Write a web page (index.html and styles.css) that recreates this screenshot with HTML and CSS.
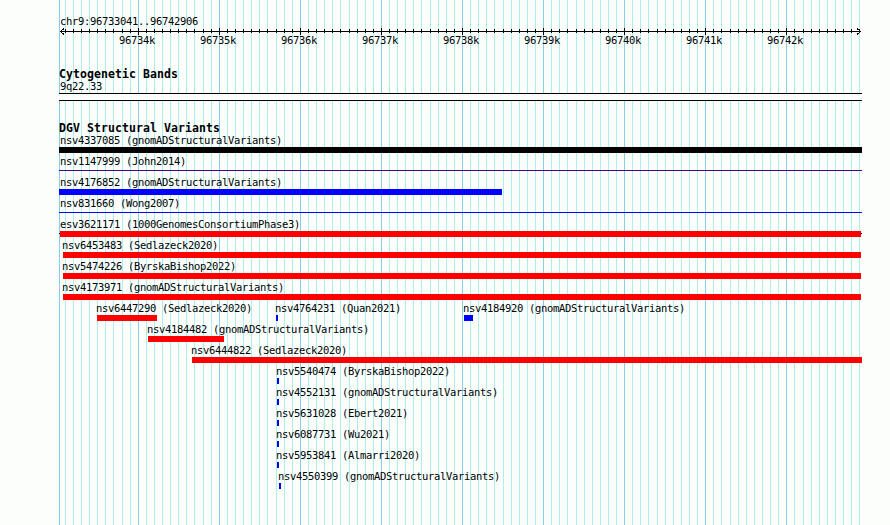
FILE: index.html
```html
<html>
<head>
  <meta charset="utf-8">
  <title>DGV Structural Variants</title>
  <link rel="stylesheet" href="styles.css">
</head>
<body>
  <div class="browser">
    <svg class="gridlines" id="gridlines" width="890" height="525"></svg>
    <div class="tracks">
      <div class="region">chr9:96733041..96742906</div>
      <svg class="ruler" id="ruler" width="803" height="9">
        <path d="M1 4.5H802M5 1.5L1.5 4.5L5 7.5M798 1.5L801.5 4.5L798 7.5" />
      </svg>
      <div class="scale" id="scale"></div>
      <h2>Cytogenetic Bands</h2>
      <div class="band-name">9q22.33</div>
      <div class="band"></div>
      <h2>DGV Structural Variants</h2>
      <div id="variants"></div>
    </div>
  </div>
  <script>
    var LEFT = 59;
    var start = 96733041;
    var pxPerBase = 0.08107;

    // label, study, colour, bar start, bar end, label start (pixels on the panel)
    var rows = [
      [['nsv4337085', 'gnomADStructuralVariants', 'black', 59, 862, 60]],
      [['nsv1147999', 'John2014', 'indigo thin', 59, 862, 60]],
      [['nsv4176852', 'gnomADStructuralVariants', 'blue', 59, 502, 60]],
      [['nsv831660', 'Wong2007', 'blue thin', 59, 862, 60]],
      [['esv3621171', '1000GenomesConsortiumPhase3', 'red open', 59, 862, 60]],
      [['nsv6453483', 'Sedlazeck2020', 'red', 63, 861, 62]],
      [['nsv5474226', 'ByrskaBishop2022', 'red', 63, 861, 62]],
      [['nsv4173971', 'gnomADStructuralVariants', 'red', 63, 861, 62]],
      [['nsv6447290', 'Sedlazeck2020', 'red', 97, 157, 96],
       ['nsv4764231', 'Quan2021', 'blue', 276, 278, 275],
       ['nsv4184920', 'gnomADStructuralVariants', 'blue', 464, 473, 463]],
      [['nsv4184482', 'gnomADStructuralVariants', 'red', 148, 224, 147]],
      [['nsv6444822', 'Sedlazeck2020', 'red', 192, 862, 191]],
      [['nsv5540474', 'ByrskaBishop2022', 'blue', 277, 279, 276]],
      [['nsv4552131', 'gnomADStructuralVariants', 'blue', 277, 279, 276]],
      [['nsv5631028', 'Ebert2021', 'blue', 277, 279, 276]],
      [['nsv6087731', 'Wu2021', 'blue', 277, 279, 276]],
      [['nsv5953841', 'Almarri2020', 'blue', 277, 279, 276]],
      [['nsv4550399', 'gnomADStructuralVariants', 'blue', 279, 281, 278]]
    ];

    function xOf(pos){
      return Math.round(60 + (pos - start) * pxPerBase);
    }

    function line(cls, x, y1, y2){
      return '<path class="' + cls + '" d="M' + (x + 0.5) + ' ' + y1 + 'V' + y2 + '" />';
    }

    // grid lines, ruler ticks and tick labels
    var grid = line('major', LEFT, 0, 525);
    var ticks = '';
    var labels = '';
    for(var pos = 96733100; pos <= 96742900; pos += 100){
      var x = xOf(pos);
      var major = pos % 1000 == 0;
      grid += line(major ? 'major' : 'minor', x, 0, 525);
      ticks += major ? line('tick', x - LEFT, 1, 8) : line('tick', x - LEFT, 2, 6);
      if(major){
        labels += '<span style="margin-left:' + (x - 19 - LEFT) + 'px">' + pos / 1000 + 'k</span>';
      }
    }
    document.getElementById("gridlines").innerHTML = grid;
    document.getElementById("ruler").innerHTML += ticks;
    document.getElementById("scale").innerHTML = labels;

    var html = '';
    for(var i = 0; i < rows.length; i++){
      html += '<div class="row">';
      for(var j = 0; j < rows[i].length; j++){
        var f = rows[i][j];
        html += '<div class="feature">' +
          '<div class="name" style="margin-left:' + (f[5] - LEFT) + 'px">' + f[0] + ' (' + f[1] + ')</div>' +
          '<div class="bar ' + f[2] + '" style="margin-left:' + (f[3] - LEFT) + 'px;width:' + (f[4] - f[3]) + 'px"></div>' +
          '</div>';
      }
      html += '</div>';
    }
    document.getElementById("variants").innerHTML = html;
  </script>
</body>
</html>
```
FILE: styles.css
```css
body {
  margin: 0;
  background: #fcfefc;
  color: #000;
  font-family: "DejaVu Sans Mono", monospace;
  font-size: 10.5px;
  line-height: 12px;
  letter-spacing: -0.321px;
  white-space: nowrap;
}
.browser {
  display: grid;
  width: 890px;
  height: 525px;
  overflow: hidden;
}
.gridlines, .tracks {
  grid-area: 1 / 1;
}
.gridlines path, .ruler path {
  fill: none;
  shape-rendering: crispEdges;
}
.gridlines .minor { stroke: #afeeee; }
.gridlines .major { stroke: #87ceeb; }
.ruler path { stroke: #000; }
.tracks {
  padding: 15px 0 0 59px;
}
.region {
  height: 12px;
  padding-left: 1px;
}
.ruler {
  display: block;
}
.scale {
  display: grid;
  height: 13px;
  margin-top: -2px;
}
.scale span {
  grid-area: 1 / 1;
}
h2 {
  height: 12px;
  margin: 21px 0 0;
  font-size: 11.5px;
  line-height: 13px;
  font-weight: bold;
  letter-spacing: 0.077px;
}
.band-name {
  height: 13px;
  padding-left: 1px;
}
.band {
  width: 803px;
  height: 8px;
  box-sizing: border-box;
  border: solid #000;
  border-width: 1px 0;
  background: #fcfefc;
}
.row {
  display: grid;
  height: 21px;
}
.feature {
  grid-area: 1 / 1;
}
.name {
  height: 13px;
}
.bar {
  height: 6px;
}
.thin {
  height: 1px;
  margin-top: 2px;
}
.black { background: #000; }
.indigo { background: #4b0082; }
.blue { background: #00f; }
.red { background: #f00; }
/* connector line shows one pixel past each end of the box */
.open {
  background:
    linear-gradient(#f00, #f00) 1px 0 / calc(100% - 2px) 6px no-repeat,
    linear-gradient(#000, #000) 0 2px / 100% 1px no-repeat;
}
```
